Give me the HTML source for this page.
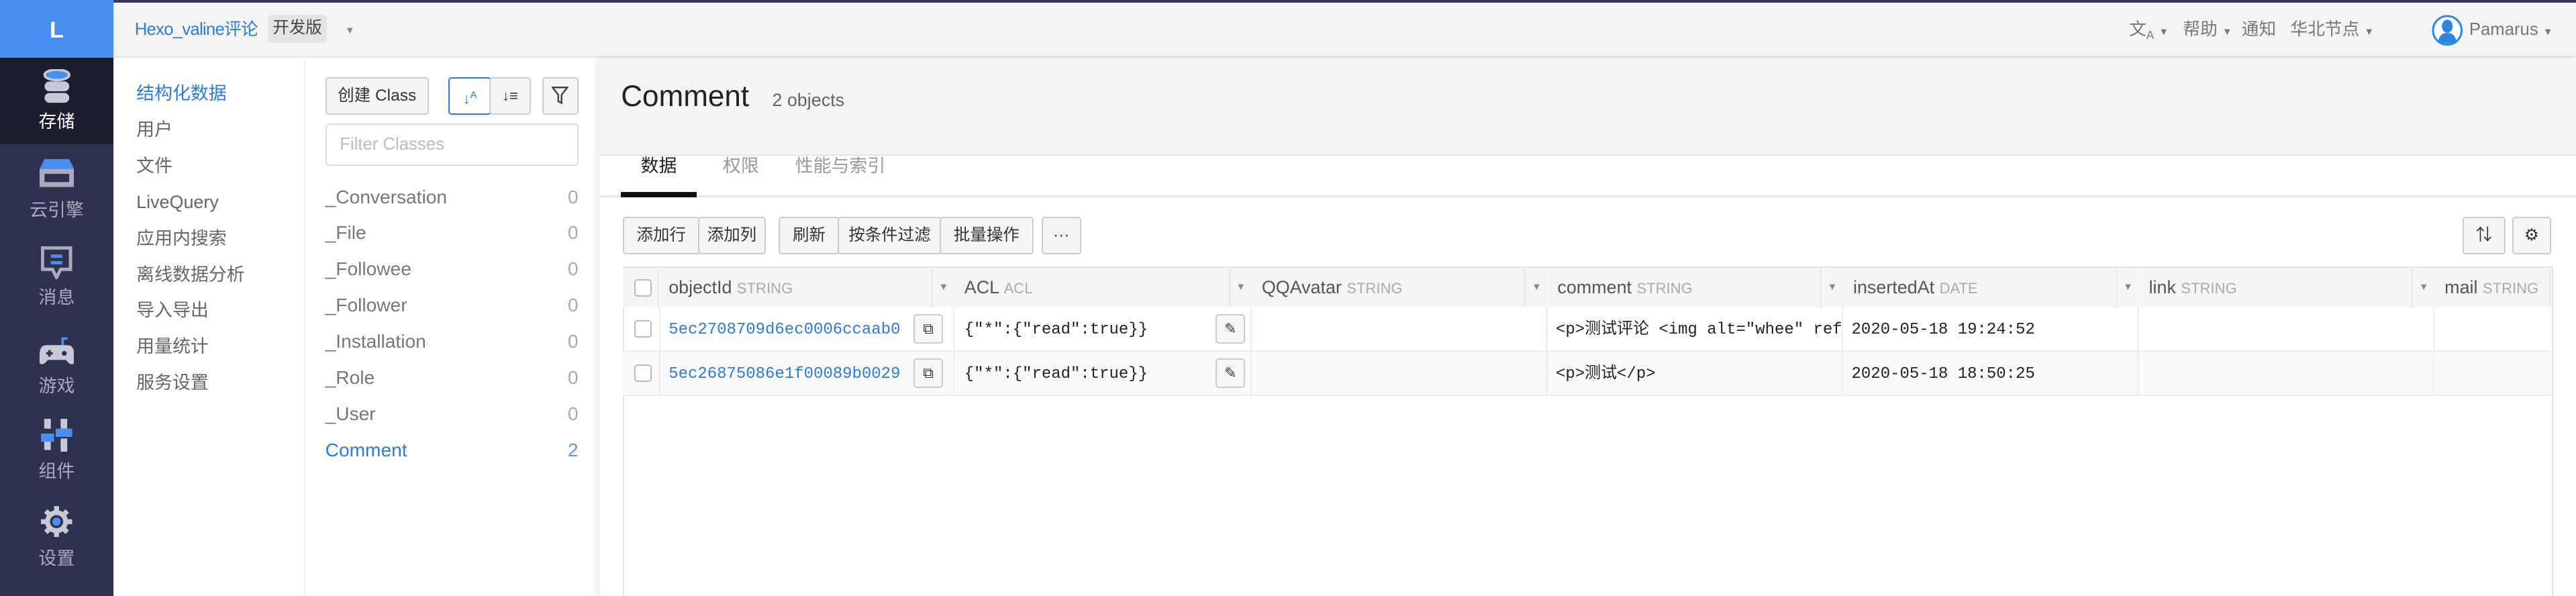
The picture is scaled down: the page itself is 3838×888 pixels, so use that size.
<!DOCTYPE html>
<html><head><meta charset="utf-8"><style>
html,body{margin:0;padding:0;width:3838px;height:888px;overflow:hidden;background:#fff}
#z{zoom:2.4477;width:1568px;height:363px;position:relative;font-family:"Liberation Sans","Noto Sans CJK SC",sans-serif;font-size:12px;color:#333}
.a{position:absolute;line-height:14px}
.top{left:0;top:0;width:1568px;height:35px;background:#f4f4f4;border-top:2px solid #3f3558;box-sizing:border-box;border-bottom:1px solid #e6e6e6}
.side{left:0;top:0;width:69px;height:363px;background:#2f3150}
.logo{left:0;top:0;width:69px;height:35px;background:#4a8ff0;color:#fff;font-weight:bold;font-size:14px;text-align:center;line-height:37px}
.act{left:0;top:35px;width:69px;height:53px;background:#1c1d2e}
.sl{width:69px;text-align:center;font-size:11px;color:#a9abbd}
.nav{left:83px;font-size:11px;color:#666}
.cls{left:198px;width:154px;font-size:11.5px;color:#777}
.cls span{float:right;color:#aaa}
.btn{border:1px solid #ccc;border-radius:2px;background:#f5f5f5;box-sizing:border-box;font-size:10px;color:#333;text-align:center;line-height:21px;height:23px}
.mono{font-family:"Liberation Mono","Noto Sans CJK SC",monospace;font-size:9.8px}
.th{top:163px;height:24px;background:#f5f5f5;border-right:1px solid #e8e8e8;box-sizing:border-box;line-height:24px;padding-left:6px;font-size:11px;color:#555;white-space:nowrap;overflow:hidden}
.th i{font-style:normal;color:#aaa;font-size:9px}
.arr{top:163px;height:24px;width:13px;border-left:1px solid #e8e8e8;background:#f5f5f5;color:#888;font-size:6px;text-align:center;line-height:24px}
.cb{width:9px;height:9px;border:1px solid #bbb;border-radius:2px;background:#fff}
.ib{width:18px;height:18px;border:1px solid #ccc;border-radius:2px;background:#f7f7f7;box-sizing:border-box}
</style></head><body><div id="z">
<div class="a top"></div>
<div class="a" style="left:82px;top:11px;color:#2f7bd8;font-size:10.5px;letter-spacing:-0.3px">Hexo_valine评论</div>
<div class="a" style="left:163px;top:9px;background:#e4e4e4;border-radius:3px;padding:1px 3px;font-size:10px;color:#444;line-height:15px">开发版</div>
<div class="a" style="left:210px;top:12px;color:#888;font-size:6px">▼</div>
<div class="a" style="left:1296px;top:11px;color:#777;font-size:10.5px;white-space:nowrap">文<sub style="font-size:7px">A</sub> <span style="font-size:6px">▼</span>&nbsp;&nbsp; 帮助 <span style="font-size:6px">▼</span>&nbsp;&nbsp;通知&nbsp;&nbsp; 华北节点 <span style="font-size:6px">▼</span></div>
<svg class="a" style="left:1480px;top:9px" width="19" height="19" viewBox="0 0 19 19"><circle cx="9.5" cy="9.5" r="8.7" fill="#fff" stroke="#2e86de" stroke-width="1.2"/><ellipse cx="9.5" cy="7" rx="3.3" ry="4" fill="#2e86de"/><path d="M4 16 Q5 11 9.5 11 Q14 11 15 16 Q9.5 19 4 16Z" fill="#2e86de"/></svg>
<div class="a" style="left:1503px;top:11px;color:#777;font-size:10.5px">Pamarus <span style="font-size:6px">▼</span></div>

<div class="a side"></div>
<div class="a logo">L</div>
<div class="a act"></div>
<svg class="a" style="left:26px;top:42px" width="17" height="22" viewBox="0 0 17 22"><ellipse cx="8.5" cy="3.5" rx="7.5" ry="3.2" fill="#4a8ff0" stroke="#c8c9d6" stroke-width="1.5"/><rect x="1" y="7.5" width="15" height="6" rx="3" fill="#c8c9d6"/><rect x="1" y="14.5" width="15" height="6" rx="3" fill="#c8c9d6"/></svg>
<div class="a sl" style="top:67px;color:#fff">存储</div>
<svg class="a" style="left:24px;top:97px" width="21" height="17" viewBox="0 0 21 17"><path d="M3 0H18L21 6H0Z" fill="#4a8ff0"/><rect x="0" y="6" width="21" height="11" fill="#a9abbd"/><rect x="3" y="9" width="15" height="5" fill="#2f3150"/></svg>
<div class="a sl" style="top:121px">云引擎</div>
<svg class="a" style="left:25px;top:150px" width="19" height="20" viewBox="0 0 19 20"><path d="M1 1H18V14H12L9.5 19L7 14H1Z" fill="none" stroke="#a9abbd" stroke-width="2"/><rect x="6" y="5" width="7" height="2" fill="#4a8ff0"/><rect x="6" y="9" width="7" height="2" fill="#4a8ff0"/></svg>
<div class="a sl" style="top:174px">消息</div>
<svg class="a" style="left:24px;top:205px" width="21" height="18" viewBox="0 0 21 18"><path d="M14 5V1H17" fill="none" stroke="#4a8ff0" stroke-width="1.5"/><path d="M4 5H17Q21 5 21 11V16Q19 18 16 14H5Q2 18 0 16V11Q0 5 4 5Z" fill="#c8c9d6"/><path d="M4 10H8M6 8V12" stroke="#2f3150" stroke-width="1.5"/><circle cx="15" cy="10" r="1.5" fill="#2f3150"/></svg>
<div class="a sl" style="top:228px">游戏</div>
<svg class="a" style="left:25px;top:255px" width="19" height="20" viewBox="0 0 19 20"><rect x="2" y="0" width="4" height="6" fill="#c8c9d6"/><rect x="12" y="0" width="4" height="6" fill="#c8c9d6"/><rect x="9" y="6" width="10" height="5" fill="#4a8ff0"/><rect x="0" y="9" width="8" height="5" fill="#4a8ff0"/><rect x="2" y="14" width="4" height="5" fill="#c8c9d6"/><rect x="12" y="12" width="4" height="8" fill="#c8c9d6"/></svg>
<div class="a sl" style="top:280px">组件</div>
<svg class="a" style="left:25px;top:308px" width="19" height="19" viewBox="0 0 19 19"><circle cx="9.5" cy="9.5" r="7" fill="#c8c9d6"/><g stroke="#c8c9d6" stroke-width="3"><path d="M9.5 0V19M0 9.5H19M3 3L16 16M16 3L3 16"/></g><circle cx="9.5" cy="9.5" r="4" fill="#2f3150"/><circle cx="9.5" cy="9.5" r="2.5" fill="#4a8ff0"/></svg>
<div class="a sl" style="top:333px">设置</div>

<div class="a" style="left:185px;top:35px;width:1px;height:328px;background:#eee"></div>
<div class="a nav" style="top:50px;color:#2f7bd8">结构化数据</div>
<div class="a nav" style="top:72px">用户</div>
<div class="a nav" style="top:94px">文件</div>
<div class="a nav" style="top:116px">LiveQuery</div>
<div class="a nav" style="top:138px">应用内搜索</div>
<div class="a nav" style="top:160px">离线数据分析</div>
<div class="a nav" style="top:182px">导入导出</div>
<div class="a nav" style="top:204px">用量统计</div>
<div class="a nav" style="top:226px">服务设置</div>

<div class="a btn" style="left:198px;top:47px;width:63px">创建 Class</div>
<div class="a btn" style="left:273px;top:47px;width:26px;border-color:#2f7bd8;background:#fff;color:#2f7bd8;font-size:9px">↓<sup style="font-size:6px">A</sup></div>
<div class="a btn" style="left:298px;top:47px;width:25px;font-size:9px">↓≡</div>
<div class="a btn" style="left:330px;top:47px;width:22px"><svg width="10" height="11" viewBox="0 0 10 11" style="margin-top:5px"><path d="M0.5 0.5H9.5L6 5V10L4 9V5Z" fill="none" stroke="#444"/></svg></div>
<div class="a" style="left:198px;top:75px;width:154px;height:26px;border:1px solid #ddd;border-radius:2px;box-sizing:border-box;color:#bbb;font-size:10.5px;line-height:24px;padding-left:8px">Filter Classes</div>
<div class="a cls" style="top:113px">_Conversation<span>0</span></div>
<div class="a cls" style="top:135px">_File<span>0</span></div>
<div class="a cls" style="top:157px">_Followee<span>0</span></div>
<div class="a cls" style="top:179px">_Follower<span>0</span></div>
<div class="a cls" style="top:201px">_Installation<span>0</span></div>
<div class="a cls" style="top:223px">_Role<span>0</span></div>
<div class="a cls" style="top:245px">_User<span>0</span></div>
<div class="a cls" style="top:267px;color:#2f7bd8">Comment<span style="color:#5a9be0">2</span></div>

<div class="a" style="left:365px;top:35px;width:1203px;height:328px;background:#fff;box-shadow:-2px 0 4px rgba(0,0,0,.08)"></div>
<div class="a" style="left:365px;top:35px;width:1203px;height:59px;background:#f4f4f4;border-bottom:1px solid #e3e3e3"></div>
<div class="a" style="left:378px;top:48px;font-size:18px;line-height:22px;color:#222">Comment</div>
<div class="a" style="left:470px;top:54px;font-size:11px;color:#666">2 objects</div>
<div class="a" style="left:365px;top:119px;width:1203px;height:1px;background:#e6e6e6"></div>
<div class="a" style="left:378px;top:117px;width:46px;height:3px;background:#111"></div>
<div class="a" style="left:390px;top:94px;font-size:11px;line-height:14px;color:#222;margin-top:0">数据</div>
<div class="a" style="left:440px;top:94px;font-size:11px;color:#999">权限</div>
<div class="a" style="left:484px;top:94px;font-size:11px;color:#999">性能与索引</div>

<div class="a btn" style="left:379px;top:132px;width:47px">添加行</div>
<div class="a btn" style="left:425px;top:132px;width:41px">添加列</div>
<div class="a btn" style="left:474px;top:132px;width:37px">刷新</div>
<div class="a btn" style="left:510px;top:132px;width:63px">按条件过滤</div>
<div class="a btn" style="left:572px;top:132px;width:57px">批量操作</div>
<div class="a btn" style="left:634px;top:132px;width:24px">···</div>
<div class="a btn" style="left:1499px;top:132px;width:26px;font-size:10px">⇅</div>
<div class="a btn" style="left:1529px;top:132px;width:24px;font-size:10px">⚙</div>

<div class="a" style="left:379px;top:162px;width:1175px;height:201px;border:1px solid #e4e4e4;border-bottom:none;box-sizing:border-box"></div>
<div class="a" style="left:379px;top:163px;width:22px;height:24px;background:#f5f5f5;border-right:1px solid #e8e8e8;box-sizing:border-box"></div>
<div class="a cb" style="left:386px;top:170px"></div>
<div class="a th" style="left:401px;width:167px">objectId <i>STRING</i></div><div class="a arr" style="left:567px">▼</div>
<div class="a th" style="left:581px;width:168px">ACL <i>ACL</i></div><div class="a arr" style="left:748px">▼</div>
<div class="a th" style="left:762px;width:167px">QQAvatar <i>STRING</i></div><div class="a arr" style="left:928px">▼</div>
<div class="a th" style="left:942px;width:167px">comment <i>STRING</i></div><div class="a arr" style="left:1108px">▼</div>
<div class="a th" style="left:1122px;width:167px">insertedAt <i>DATE</i></div><div class="a arr" style="left:1288px">▼</div>
<div class="a th" style="left:1302px;width:167px">link <i>STRING</i></div><div class="a arr" style="left:1468px">▼</div>
<div class="a th" style="left:1482px;width:71px">mail <i>STRING</i></div>

<div class="a" style="left:379px;top:187px;width:1174px;height:27px;border-bottom:1px solid #eee;box-sizing:border-box"></div>
<div class="a" style="left:379px;top:214px;width:1174px;height:27px;background:#fafafa;border-bottom:1px solid #eee;box-sizing:border-box"></div>
<div class="a" style="left:401px;top:187px;width:1px;height:54px;background:#eee"></div>
<div class="a" style="left:580px;top:187px;width:1px;height:54px;background:#eee"></div>
<div class="a" style="left:761px;top:187px;width:1px;height:54px;background:#eee"></div>
<div class="a" style="left:941px;top:187px;width:1px;height:54px;background:#eee"></div>
<div class="a" style="left:1121px;top:187px;width:1px;height:54px;background:#eee"></div>
<div class="a" style="left:1301px;top:187px;width:1px;height:54px;background:#eee"></div>
<div class="a" style="left:1481px;top:187px;width:1px;height:54px;background:#eee"></div>

<div class="a cb" style="left:386px;top:195px"></div>
<div class="a cb" style="left:386px;top:222px"></div>
<div class="a mono" style="left:407px;top:194px;color:#2f7bd8">5ec2708709d6ec0006ccaab0</div>
<div class="a mono" style="left:407px;top:221px;color:#2f7bd8">5ec26875086e1f00089b0029</div>
<div class="a ib" style="left:556px;top:191px;text-align:center;font-size:9px;line-height:16px">⧉</div>
<div class="a ib" style="left:556px;top:218px;text-align:center;font-size:9px;line-height:16px">⧉</div>
<div class="a mono" style="left:587px;top:194px;color:#222">{"*":{"read":true}}</div>
<div class="a mono" style="left:587px;top:221px;color:#222">{"*":{"read":true}}</div>
<div class="a ib" style="left:740px;top:191px;text-align:center;font-size:9px;line-height:16px">✎</div>
<div class="a ib" style="left:740px;top:218px;text-align:center;font-size:9px;line-height:16px">✎</div>
<div class="a mono" style="left:947px;top:194px;color:#222;width:174px;overflow:hidden;white-space:nowrap">&lt;p&gt;测试评论 &lt;img alt="whee" ref</div>
<div class="a mono" style="left:947px;top:221px;color:#222">&lt;p&gt;测试&lt;/p&gt;</div>
<div class="a mono" style="left:1127px;top:194px;color:#222">2020-05-18 19:24:52</div>
<div class="a mono" style="left:1127px;top:221px;color:#222">2020-05-18 18:50:25</div>
</div></body></html>
